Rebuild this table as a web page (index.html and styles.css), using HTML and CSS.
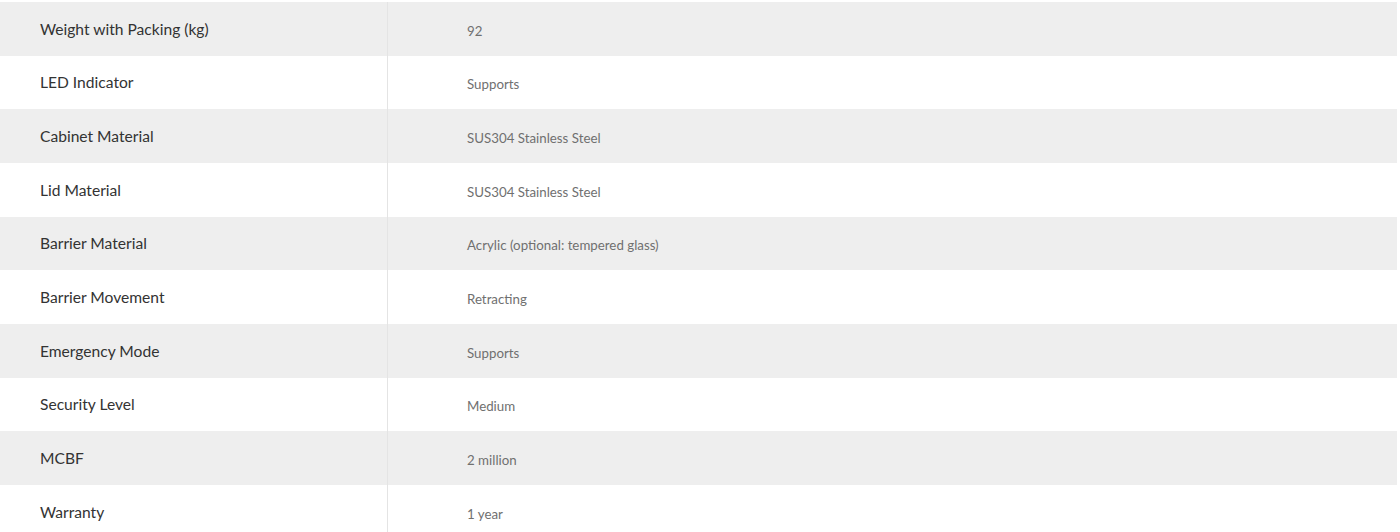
FILE: index.html
```html
<!DOCTYPE html>
<html lang="en">
<head>
<meta charset="utf-8">
<title>Specifications</title>
<link rel="stylesheet" href="styles.css">
</head>
<body>
<table class="specs">
  <tbody>
    <tr><th>Weight with Packing (kg)</th><td>92</td></tr>
    <tr><th>LED Indicator</th><td>Supports</td></tr>
    <tr><th>Cabinet Material</th><td>SUS304 Stainless Steel</td></tr>
    <tr><th>Lid Material</th><td>SUS304 Stainless Steel</td></tr>
    <tr><th>Barrier Material</th><td>Acrylic (optional: tempered glass)</td></tr>
    <tr><th>Barrier Movement</th><td>Retracting</td></tr>
    <tr><th>Emergency Mode</th><td>Supports</td></tr>
    <tr><th>Security Level</th><td>Medium</td></tr>
    <tr><th>MCBF</th><td>2 million</td></tr>
    <tr><th>Warranty</th><td>1 year</td></tr>
  </tbody>
</table>
</body>
</html>
```

FILE: styles.css
```css
html, body {
  margin: 0;
  padding: 0;
  background: #ffffff;
}

body {
  padding-top: 2px;
  font-family: Lato, "Open Sans", sans-serif;
  overflow: hidden;
}

.specs {
  width: 1397px;
  border-collapse: collapse;
  border-spacing: 0;
  table-layout: fixed;
}

.specs tr {
  height: 53.67px;
}

.specs tr:nth-child(odd) {
  background: #eeeeee;
}

.specs th,
.specs td {
  padding: 0;
  vertical-align: middle;
  text-align: left;
}

.specs th {
  width: 347px;
  padding-left: 40px;
  border-right: 1px solid #e4e4e4;
  font-weight: 400;
  font-size: 15.6px;
  color: #333333;
}

.specs td {
  padding-left: 79px;
  padding-top: 4px;
  font-size: 13.3px;
  color: #707070;
}
```
